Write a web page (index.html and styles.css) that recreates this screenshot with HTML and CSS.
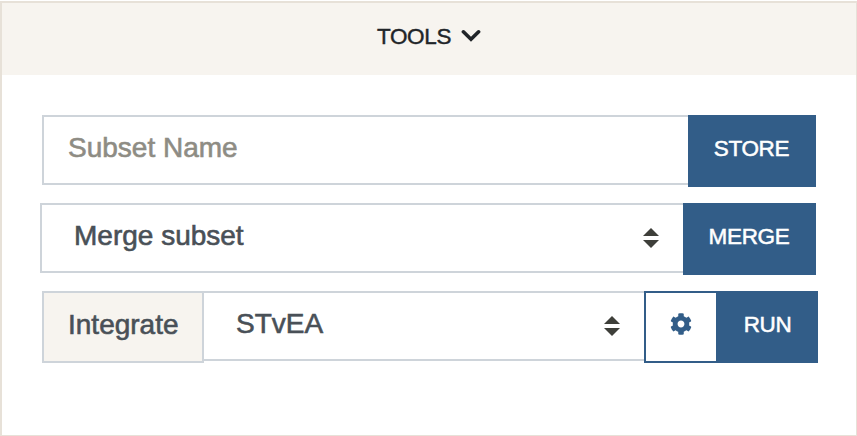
FILE: index.html
```html
<!DOCTYPE html>
<html lang="en">
<head>
<meta charset="utf-8">
<title>Tools</title>
<link rel="stylesheet" href="styles.css">
</head>
<body>
<section class="card">
  <header class="card-header">
    <span class="title">TOOLS</span>
    <svg class="chevron" viewBox="0 0 20 14"><path d="M2.400 2.800 10 10.300 17.600 2.800"/></svg>
  </header>
  <div class="card-body">
    <div class="group">
      <input class="field" type="text" placeholder="Subset Name" aria-label="Subset Name">
      <button class="btn store">STORE</button>
    </div>
    <div class="group merge-group">
      <div class="field select"><span>Merge subset</span>
        <svg class="caret" viewBox="0 0 16 20"><path d="M0 8 8 0l8 8zM0 12h16l-8 8z"/></svg>
      </div>
      <button class="btn merge">MERGE</button>
    </div>
    <div class="group run-group">
      <span class="addon">Integrate</span>
      <div class="field select method"><span>STvEA</span>
        <svg class="caret" viewBox="0 0 16 20"><path d="M0 8 8 0l8 8zM0 12h16l-8 8z"/></svg>
      </div>
      <button class="btn gear" aria-label="Settings">
        <svg viewBox="0 0 512 512"><path d="M487.4 315.7l-42.6-24.6c4.3-23.2 4.3-47 0-70.2l42.6-24.6c4.9-2.8 7.1-8.6 5.5-14-11.1-35.600-30-67.800-54.700-94.600-3.800-4.100-10-5.100-14.800-2.300L380.800 110c-17.900-15.400-38.500-27.300-60.800-35.100V25.800c0-5.600-3.900-10.500-9.400-11.700-36.700-8.200-74.300-7.800-109.200 0-5.500 1.200-9.400 6.100-9.400 11.700V75c-22.200 7.900-42.800 19.800-60.800 35.100L88.700 85.500c-4.900-2.800-11-1.900-14.800 2.300-24.700 26.700-43.600 58.900-54.700 94.600-1.700 5.400.6 11.200 5.500 14L67.300 221c-4.300 23.200-4.300 47 0 70.200l-42.600 24.600c-4.900 2.800-7.100 8.600-5.500 14 11.100 35.600 30 67.800 54.700 94.600 3.800 4.100 10 5.100 14.800 2.300l42.600-24.600c17.900 15.400 38.500 27.300 60.800 35.100v49.200c0 5.600 3.900 10.500 9.400 11.700 36.700 8.200 74.300 7.800 109.200 0 5.500-1.200 9.400-6.100 9.400-11.700v-49.200c22.200-7.900 42.800-19.800 60.800-35.100l42.600 24.600c4.900 2.800 11 1.900 14.800-2.300 24.700-26.700 43.600-58.900 54.700-94.600 1.500-5.500-.7-11.300-5.600-14.100zM256 336c-44.100 0-80-35.900-80-80s35.900-80 80-80 80 35.900 80 80-35.900 80-80 80z"/></svg>
      </button>
      <button class="btn run">RUN</button>
    </div>
  </div>
</section>
</body>
</html>
```
FILE: styles.css
```css
* {
  box-sizing: border-box;
}

body {
  margin: 0;
  padding-top: 1px;
  height: 436px;
  overflow: hidden;
  background: #fff;
  font: 28px/40px "Liberation Sans", Arial, sans-serif;
}

.card {
  height: 435px;
  border: solid #e7e1d8;
  border-width: 2px 1px 1px 2px;
}

.card-header {
  display: flex;
  justify-content: center;
  gap: 10px;
  height: 72px;
  padding-top: 14px;
  background: #f7f4ef;
  color: #212529;
  font-size: 22.5px;
}

.title {
  letter-spacing: -0.35px;
  -webkit-text-stroke: 0.4px;
}

.chevron {
  width: 20px;
  height: 14px;
  margin-top: 12px;
  fill: none;
  stroke: #212529;
  stroke-width: 3.6;
  stroke-linecap: round;
}

.card-body {
  display: flex;
  flex-direction: column;
  gap: 16px;
  padding: 40px;
}

.group {
  display: flex;
  align-items: flex-start;
  height: 72px;
  width: 774px;
}

.merge-group {
  width: 776px;
  margin-left: -2px;
}

.run-group {
  width: 776px;
}

.field {
  flex: 1;
  min-width: 0;
  height: 70px;
  margin: 0;
  padding: 0 24px 4px;
  border: 2px solid #ced4da;
  border-right: 0;
  border-radius: 0;
  background: #fff;
  color: #495057;
  font: inherit;
  -webkit-text-stroke: 0.6px;
}

.field::placeholder {
  color: #8e8c84;
  opacity: 1;
}

.select {
  display: flex;
  justify-content: space-between;
  padding: 11px 24px 0 32px;
}

.method {
  border-left: 0;
}

.caret {
  width: 16px;
  height: 20px;
  margin-top: 12px;
  fill: #3e3f3a;
}

.addon {
  width: 162px;
  height: 72px;
  padding: 12px 0 0 24px;
  border: 2px solid #ced4da;
  background: #f7f4ef;
  color: #495057;
  -webkit-text-stroke: 0.6px;
}

.btn {
  height: 72px;
  padding: 0 1px 4px 0;
  border: 2px solid #325d88;
  border-radius: 0;
  background: #325d88;
  color: #fff;
  font: 22.5px/32px "Liberation Sans", Arial, sans-serif;
  letter-spacing: -0.35px;
  -webkit-text-stroke: 0.5px;
}

.store {
  width: 128px;
}

.merge {
  width: 133px;
}

.gear {
  display: flex;
  justify-content: center;
  width: 74px;
  padding: 20px 1px 0 0;
  background: #fff;
}

.gear svg {
  width: 22px;
  height: 22px;
  fill: #325d88;
}

.run {
  width: 100px;
}
```
